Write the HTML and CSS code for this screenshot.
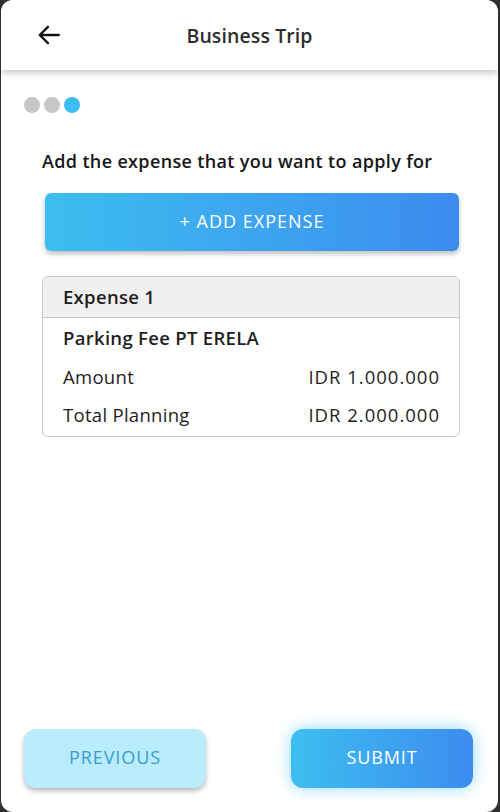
FILE: index.html
```html
<!DOCTYPE html>
<html>
<head>
<meta charset="utf-8">
<link rel="stylesheet" href="styles.css">
</head>
<body>
<div class="phone">
  <header class="topbar">
    <div class="back">
      <svg width="26" height="26" viewBox="0 0 24 24" fill="none" stroke="#111" stroke-width="2.2" stroke-linecap="round" stroke-linejoin="round"><path d="M21 12H4"/><path d="M11 4.5L3.5 12L11 19.5"/></svg>
    </div>
    <h1 class="title">Business Trip</h1>
    <div></div>
  </header>
  <main class="content">
    <div class="steps">
      <span class="dot"></span><span class="dot"></span><span class="dot active"></span>
    </div>
    <p class="lead">Add the expense that you want to apply for</p>
    <button class="add-btn">+ ADD EXPENSE</button>
    <section class="card">
      <div class="card-head">Expense 1</div>
      <div class="card-body">
        <div class="name">Parking Fee PT ERELA</div>
        <div class="row"><span>Amount</span><span class="val">IDR 1.000.000</span></div>
        <div class="row"><span>Total Planning</span><span class="val">IDR 2.000.000</span></div>
      </div>
    </section>
  </main>
  <footer class="actions">
    <button class="btn prev">PREVIOUS</button>
    <button class="btn submit">SUBMIT</button>
  </footer>
</div>
</body>
</html>
```
FILE: styles.css
```css
html, body { margin: 0; padding: 0; }
body {
  background: #2f2f2f;
  font-family: "Open Sans", "Noto Sans", sans-serif;
  height: 812px;
  overflow: hidden;
}
.phone {
  margin: 0 2px 0 1px;
  height: 812px;
  background: #fff;
  border-radius: 12px;
  display: flex;
  flex-direction: column;
  overflow: hidden;
}
.topbar {
  height: 70px;
  flex: none;
  display: grid;
  grid-template-columns: 1fr auto 1fr;
  align-items: center;
  background: #fff;
  box-shadow: 0 3px 7px rgba(0,0,0,0.22);
  position: relative;
  z-index: 1;
}
.back { padding-left: 35px; display: flex; align-items: center; }
.title {
  margin: 0;
  font-size: 19.5px;
  font-weight: 600;
  color: #2d2d2d;
  letter-spacing: 0.1px;
}
.content {
  padding: 27px 0 0 0;
}
.steps { display: flex; gap: 4px; padding-left: 23px; }
.dot { width: 16px; height: 16px; border-radius: 50%; background: #c6c6c6; }
.dot.active { background: #3bbdf1; }
.lead {
  margin: 36px 0 0 41px;
  font-size: 18px;
  font-weight: 600;
  color: #161616;
  line-height: 24px;
  letter-spacing: 0.35px;
}
.add-btn {
  display: block;
  margin: 20px 0 0 44px;
  width: 414px;
  height: 58px;
  padding: 0 0 2px 0;
  border: none;
  border-radius: 6px;
  background: linear-gradient(90deg, #3dbef0, #3c8cef);
  color: #fff;
  font-family: inherit;
  font-size: 18px;
  letter-spacing: 1px;
  box-shadow: 0 3px 5px rgba(0,0,0,0.25);
}
.card {
  margin: 25px 0 0 41px;
  width: 416px;
  border: 1px solid #c8c8c8;
  border-radius: 6px;
  overflow: hidden;
  color: #1e1e1e;
  font-size: 18.5px;
  letter-spacing: 0.3px;
}
.card-head {
  background: #f0f0f0;
  height: 41px;
  box-sizing: border-box;
  padding: 0 0 2px 20px;
  display: flex;
  align-items: center;
  font-weight: 600;
  border-bottom: 1px solid #c8c8c8;
}
.card-body { padding: 0 20px 1px 20px; }
.name {
  height: 41px;
  box-sizing: border-box;
  padding-bottom: 3px;
  display: flex;
  align-items: center;
  font-weight: 600;
}
.row {
  height: 38px;
  box-sizing: border-box;
  padding-bottom: 3px;
  display: flex;
  align-items: center;
  justify-content: space-between;
}
.val { letter-spacing: 1px; margin-right: -1px; }
.actions {
  margin-top: auto;
  display: flex;
  justify-content: space-between;
  padding: 0 25px 24px 23px;
}
.btn {
  width: 182px;
  height: 59px;
  padding: 0 0 3px 0;
  border: none;
  border-radius: 12px;
  font-family: inherit;
  font-size: 18px;
  letter-spacing: 0.9px;
}
.prev {
  background: #b9ecfd;
  color: #3b9ec9;
  box-shadow: 0 3px 5px rgba(0,0,0,0.28);
}
.submit {
  background: linear-gradient(90deg, #3dbef0, #3c8cef);
  color: #fff;
  box-shadow: 0 0 16px rgba(60,190,240,0.55);
}
```
